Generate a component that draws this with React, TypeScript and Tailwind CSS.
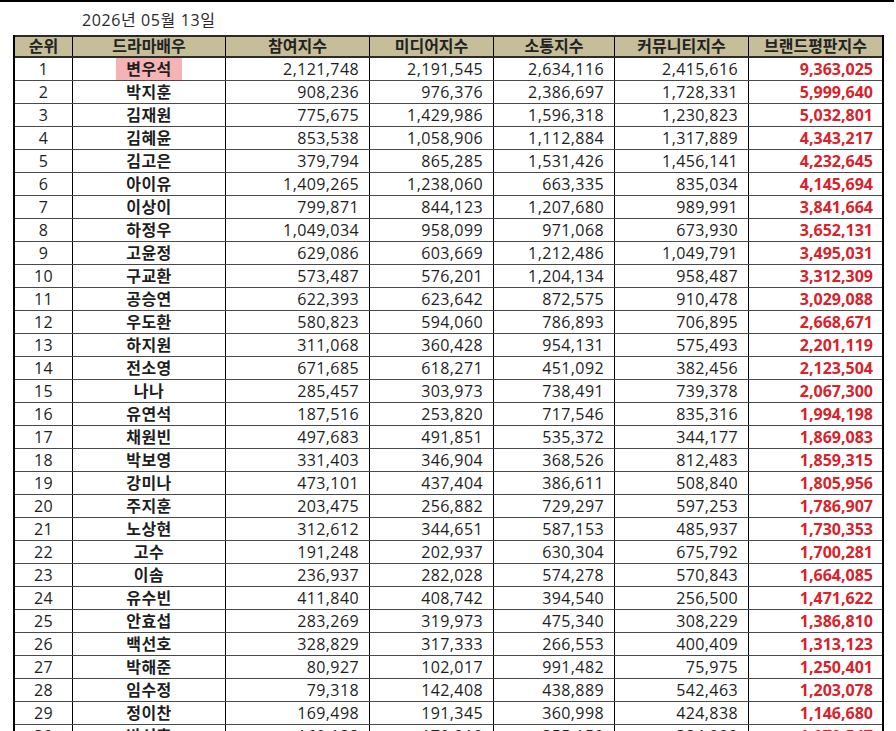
const rows: [number, string, string, string, string, string, string][] = [
  [1, "변우석", "2,121,748", "2,191,545", "2,634,116", "2,415,616", "9,363,025"],
  [2, "박지훈", "908,236", "976,376", "2,386,697", "1,728,331", "5,999,640"],
  [3, "김재원", "775,675", "1,429,986", "1,596,318", "1,230,823", "5,032,801"],
  [4, "김혜윤", "853,538", "1,058,906", "1,112,884", "1,317,889", "4,343,217"],
  [5, "김고은", "379,794", "865,285", "1,531,426", "1,456,141", "4,232,645"],
  [6, "아이유", "1,409,265", "1,238,060", "663,335", "835,034", "4,145,694"],
  [7, "이상이", "799,871", "844,123", "1,207,680", "989,991", "3,841,664"],
  [8, "하정우", "1,049,034", "958,099", "971,068", "673,930", "3,652,131"],
  [9, "고윤정", "629,086", "603,669", "1,212,486", "1,049,791", "3,495,031"],
  [10, "구교환", "573,487", "576,201", "1,204,134", "958,487", "3,312,309"],
  [11, "공승연", "622,393", "623,642", "872,575", "910,478", "3,029,088"],
  [12, "우도환", "580,823", "594,060", "786,893", "706,895", "2,668,671"],
  [13, "하지원", "311,068", "360,428", "954,131", "575,493", "2,201,119"],
  [14, "전소영", "671,685", "618,271", "451,092", "382,456", "2,123,504"],
  [15, "나나", "285,457", "303,973", "738,491", "739,378", "2,067,300"],
  [16, "유연석", "187,516", "253,820", "717,546", "835,316", "1,994,198"],
  [17, "채원빈", "497,683", "491,851", "535,372", "344,177", "1,869,083"],
  [18, "박보영", "331,403", "346,904", "368,526", "812,483", "1,859,315"],
  [19, "강미나", "473,101", "437,404", "386,611", "508,840", "1,805,956"],
  [20, "주지훈", "203,475", "256,882", "729,297", "597,253", "1,786,907"],
  [21, "노상현", "312,612", "344,651", "587,153", "485,937", "1,730,353"],
  [22, "고수", "191,248", "202,937", "630,304", "675,792", "1,700,281"],
  [23, "이솜", "236,937", "282,028", "574,278", "570,843", "1,664,085"],
  [24, "유수빈", "411,840", "408,742", "394,540", "256,500", "1,471,622"],
  [25, "안효섭", "283,269", "319,973", "475,340", "308,229", "1,386,810"],
  [26, "백선호", "328,829", "317,333", "266,553", "400,409", "1,313,123"],
  [27, "박해준", "80,927", "102,017", "991,482", "75,975", "1,250,401"],
  [28, "임수정", "79,318", "142,408", "438,889", "542,463", "1,203,078"],
  [29, "정이찬", "169,498", "191,345", "360,998", "424,838", "1,146,680"],
  [30, "박성훈", "160,188", "170,210", "355,150", "384,999", "1,070,547"],
];

const headers = ["순위", "드라마배우", "참여지수", "미디어지수", "소통지수", "커뮤니티지수", "브랜드평판지수"];
const widths = ["w-[58px]", "w-[153px]", "w-[144px]", "w-[124px]", "w-[121px]", "w-[134px]", "w-[133px]"];

const font = "font-['Open_Sans','Noto_Sans_CJK_KR',sans-serif]";

export default function App() {
  return (
    <div className={`h-[731px] w-[896px] overflow-hidden bg-white ${font}`}>
      <div className="w-[894px] border-t-2 border-black" />
      <div className="h-[33px] pl-[82px] pt-[8px] text-[16px] leading-[21px] tracking-[0.6px] text-[#2a2a2a]">
        2026년 05월 13일
      </div>

      <div className="ml-[13px] w-[871px] border-x-2 border-black">
        {/* header */}
        <div className="flex h-[23px] border-y-2 border-[#2b2b2b] bg-[#c5be98] text-[16px] font-bold leading-[19px] text-[#222]">
          {headers.map((h, i) => (
            <div
              key={h}
              className={`flex items-center justify-center ${widths[i]} ${i < 6 ? "border-r border-black" : ""}`}
            >
              {h}
            </div>
          ))}
        </div>

        {rows.map(([rank, name, a, b, c, d, total]) => (
          <div
            key={rank}
            className="flex h-[23px] border-b border-[#4a4a4a] text-[16px] leading-[22px] tracking-[0.4px] text-[#1e1e1e]"
          >
            <div className="flex w-[58px] items-center justify-center border-r border-black">{rank}</div>
            <div className="flex w-[153px] items-stretch justify-center border-r border-black font-bold tracking-[0.5px]">
              <span className={rank === 1 ? "bg-[#f5b3b6] px-[10px]" : ""}>{name}</span>
            </div>
            <div className="w-[144px] border-r border-black pr-[10px] text-right">{a}</div>
            <div className="w-[124px] border-r border-black pr-[10px] text-right">{b}</div>
            <div className="w-[121px] border-r border-black pr-[10px] text-right">{c}</div>
            <div className="w-[134px] border-r border-black pr-[10px] text-right">{d}</div>
            <div className="w-[133px] pr-[9px] text-right font-bold tracking-normal text-[#d9222a]">{total}</div>
          </div>
        ))}
      </div>
    </div>
  );
}
